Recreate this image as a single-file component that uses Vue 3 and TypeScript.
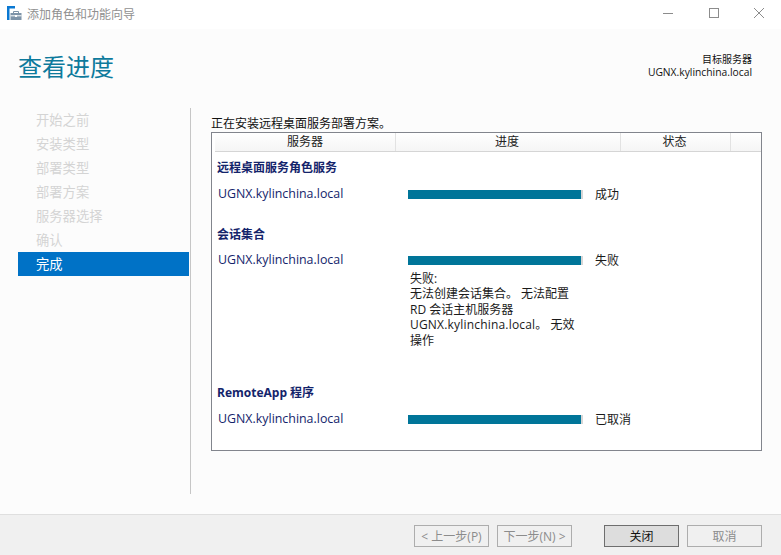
<script setup lang="ts">
const steps: string[] = ['开始之前', '安装类型', '部署类型', '部署方案', '服务器选择', '确认']
const host = 'UGNX.kylinchina.local'
</script>

<template>
  <div class="win">
    <header class="titlebar">
      <svg class="appicon" width="15" height="15" viewBox="0 0 15 15">
        <path d="M0 0 H8 V2.5 H2.5 V14 H0 Z" fill="#0a78d2" />
        <path d="M6.5 7 V5.5 H11.5 V7" stroke="#7d93a8" fill="none" />
        <rect x="3.5" y="7" width="11" height="7" fill="#7d93a8" />
        <path d="M3.5 9.8 H14.5" stroke="#fff" />
        <rect x="8" y="9" width="2" height="2" fill="#fff" />
      </svg>
      <span class="apptitle">添加角色和功能向导</span>
      <div class="winbtns">
        <svg width="11" height="11" viewBox="0 0 11 11"><path d="M0 5.5 H10" stroke="#8c8c8c" fill="none" /></svg>
        <svg width="11" height="11" viewBox="0 0 11 11"><rect x="0.5" y="0.5" width="9" height="9" stroke="#8c8c8c" fill="none" /></svg>
        <svg width="11" height="11" viewBox="0 0 11 11"><path d="M0 0 L10 10 M10 0 L0 10" stroke="#8c8c8c" fill="none" /></svg>
      </div>
    </header>

    <div class="head">
      <h1>查看进度</h1>
      <div class="target">
        <div>目标服务器</div>
        <div class="tname">{{ host }}</div>
      </div>
    </div>

    <main class="main">
      <nav class="nav">
        <div v-for="s in steps" :key="s" class="step">{{ s }}</div>
        <div class="step active">完成</div>
      </nav>
      <section class="content">
        <p class="intro">正在安装远程桌面服务部署方案。</p>
        <div class="panel">
          <div class="thead">
            <div class="th c1">服务器</div>
            <div class="th c2">进度</div>
            <div class="th c3">状态</div>
            <div class="th c4"></div>
          </div>

          <div class="group g1">
            <div class="gtitle">远程桌面服务角色服务</div>
            <div class="row">
              <div class="srv">{{ host }}</div>
              <div class="prog"><div class="bar"><i></i></div></div>
              <div class="status">成功</div>
            </div>
          </div>

          <div class="group g2">
            <div class="gtitle">会话集合</div>
            <div class="row">
              <div class="srv">{{ host }}</div>
              <div class="prog">
                <div class="bar"><i></i></div>
                <div class="err">失败:<br />无法创建会话集合。 无法配置<br />RD 会话主机服务器<br /><span class="lat">{{ host }}</span>。 无效<br />操作</div>
              </div>
              <div class="status">失败</div>
            </div>
          </div>

          <div class="group g3">
            <div class="gtitle">RemoteApp 程序</div>
            <div class="row">
              <div class="srv">{{ host }}</div>
              <div class="prog"><div class="bar"><i></i></div></div>
              <div class="status">已取消</div>
            </div>
          </div>
        </div>
      </section>
    </main>

    <footer class="foot">
      <button class="btn off">&lt; 上一步(P)</button>
      <button class="btn off">下一步(N) &gt;</button>
      <button class="btn primary">关闭</button>
      <button class="btn off">取消</button>
    </footer>
  </div>
</template>

<style>
html, body { margin: 0; padding: 0; background: #fff; }
</style>

<style scoped>
.win {
  width: 781px;
  height: 555px;
  display: flex;
  flex-direction: column;
  overflow: hidden;
  background: #fcfcfc;
  font-family: "Open Sans", "Noto Sans CJK SC", sans-serif;
  font-size: 12px;
  color: #1a1a1a;
}
.titlebar {
  height: 29px;
  flex: none;
  display: flex;
  align-items: center;
  background: #fff;
  padding-left: 7px;
}
.appicon { width: 15px; height: 15px; margin-top: -2px; overflow: visible; }
.apptitle {
  margin-left: 5px;
  color: #909090;
  font-size: 12px;
  margin-top: -2px;
}
.winbtns {
  margin-left: auto;
  display: flex;
  gap: 34.5px;
  padding-right: 16px;
  margin-top: -3px;
}
.head {
  height: 79px;
  flex: none;
  display: flex;
  justify-content: space-between;
  padding: 0 29px 0 18px;
}
h1 {
  margin: 20px 0 0;
  font-size: 24px;
  font-weight: 400;
  line-height: 36px;
  color: #0d7a9c;
}
.target {
  margin-top: 23px;
  text-align: right;
  font-size: 10px;
  line-height: 14px;
  color: #111;
}
.tname { font-size: 10.3px; margin-top: -1px; }
.main {
  flex: 1;
  min-height: 0;
  display: flex;
}
.nav {
  width: 171px;
  margin-left: 18px;
  flex: none;
}
.step {
  height: 24px;
  line-height: 25px;
  padding-left: 18px;
  font-size: 13.3px;
  color: #d4d4d4;
}
.step.active {
  background: #0072c6;
  color: #fff;
}
.content {
  margin-left: 1px;
  height: 386px;
  width: 570px;
  border-left: 1px solid #c6c6c6;
  padding-left: 20px;
  box-sizing: border-box;
}
.intro {
  margin: 7px 0 0;
  line-height: 18px;
  color: #111;
}
.panel {
  width: 551px;
  height: 319px;
  box-sizing: border-box;
  border: 1px solid #82858d;
  background: #fff;
  margin-top: -1px;
}
.thead {
  display: flex;
  height: 18px;
  border-bottom: 1px solid #d5d5d5;
  background: linear-gradient(#fff, #f5f5f5);
  width: 546px;
  margin-left: 3px;
}
.th {
  text-align: center;
  line-height: 18px;
  border-right: 1px solid #e2e2e2;
  color: #222;
  box-sizing: border-box;
}
.c1 { width: 181px; }
.c2 { width: 225px; padding-right: 2px; }
.c3 { width: 110px; padding-right: 2px; }
.c4 { width: 30px; border-right: 0; }
.gtitle {
  font-weight: 700;
  color: #14246b;
  line-height: 16px;
  padding-left: 5px;
}
.row {
  display: flex;
  align-items: flex-start;
  margin-top: 10px;
  color: #14246b;
}
.srv { width: 190px; padding-left: 6px; box-sizing: border-box; line-height: 16px; font-size: 12.4px; }
.prog { width: 193px; padding-left: 6px; box-sizing: border-box; }
.bar {
  margin-top: 4px;
  width: 175px;
  height: 9px;
  background: #d6d6d6;
}
.bar i { display: block; width: 173px; height: 9px; background: #007599; }
.err {
  color: #1a1a1a;
  width: 172px;
  line-height: 15.4px;
  margin-top: 6px;
  padding-left: 2px;
}
.lat { letter-spacing: 0.19px; }
.status { color: #1a1a1a; line-height: 18px; }
.g1 { padding-top: 8px; height: 67px; }
.g2 { height: 158px; }
.g2 .row { margin-top: 9px; }
.foot {
  height: 40px;
  flex: none;
  border-top: 1px solid #dfdfdf;
  background: #f0f0f0;
  display: flex;
  align-items: center;
  padding-left: 414px;
}
.btn {
  width: 75px;
  height: 22px;
  padding: 0;
  box-sizing: border-box;
  font: inherit;
  font-size: 12px;
  background: #f0f0f0;
  border: 1px solid #adadad;
  color: #8c8c8c;
  margin-right: 8px;
  margin-top: 1px;
}
.btn:nth-child(2) { margin-right: 32px; }
.btn.primary {
  background: #dddddd;
  border-color: #6e6e6e;
  color: #111;
}
</style>
